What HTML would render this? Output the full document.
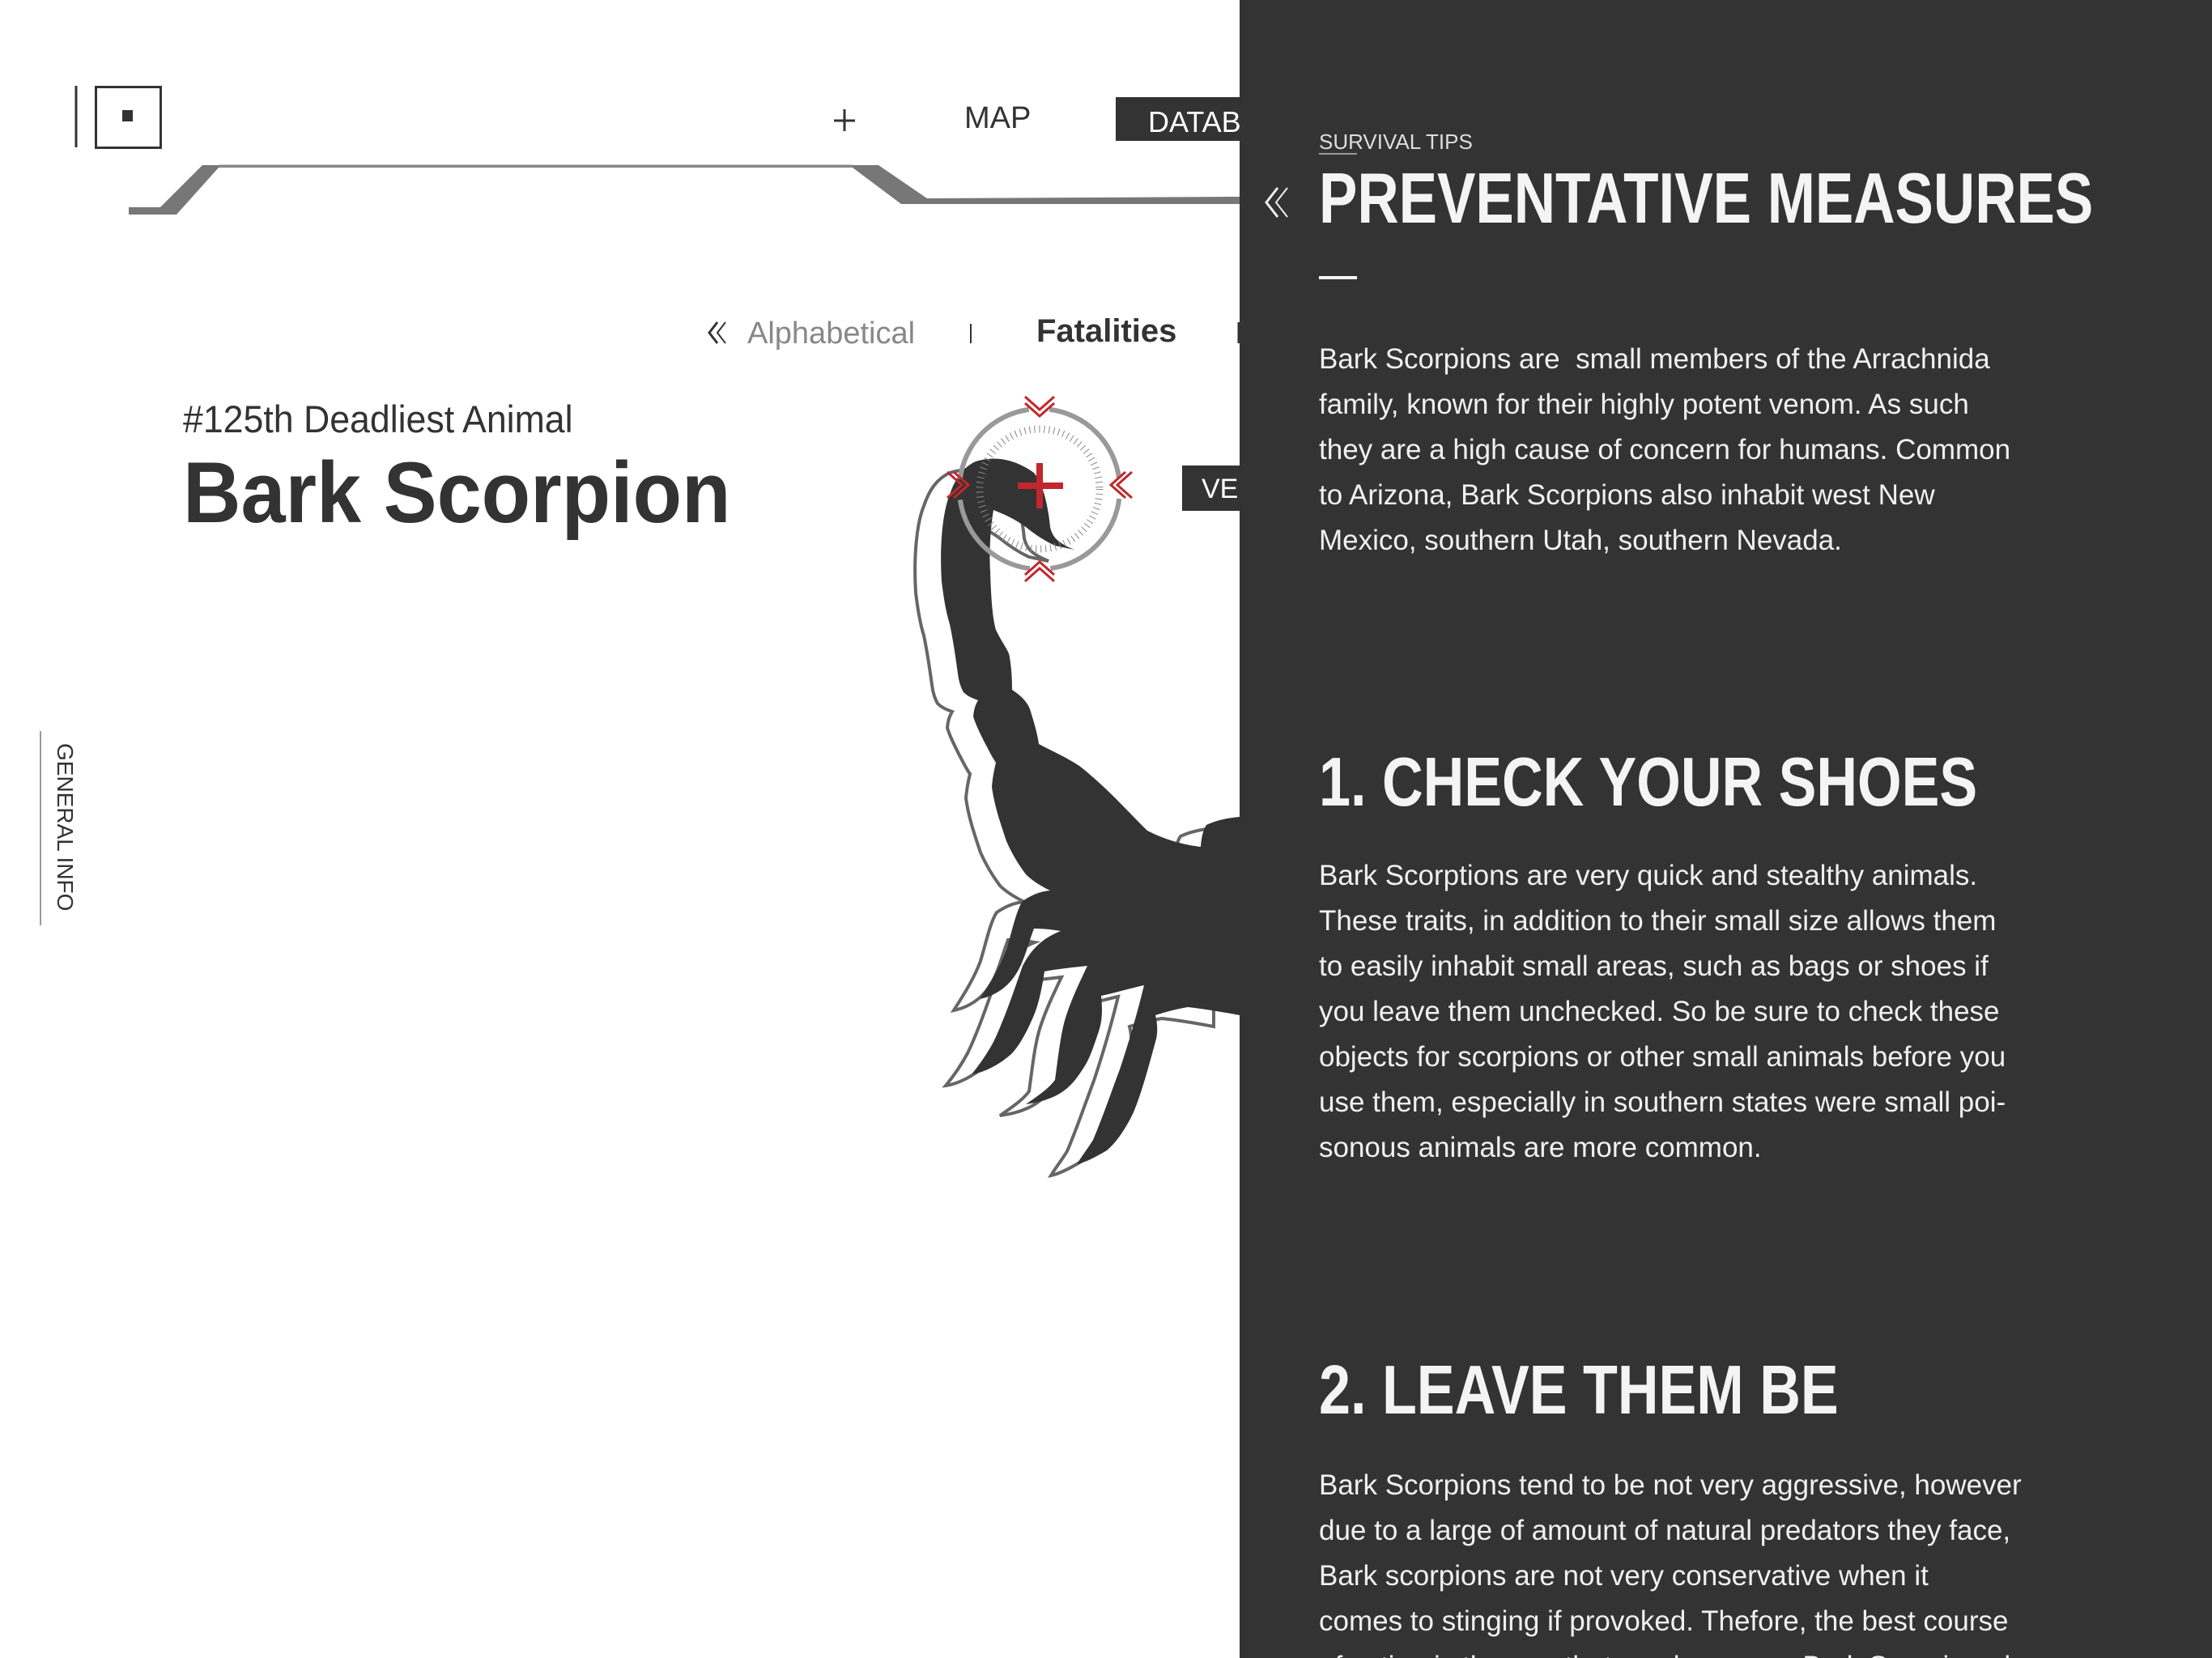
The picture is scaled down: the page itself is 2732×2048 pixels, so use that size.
<!DOCTYPE html>
<html><head><meta charset="utf-8"><style>
*{margin:0;padding:0;box-sizing:border-box}
html,body{width:2732px;height:2048px;overflow:hidden;background:#fff;font-family:"Liberation Sans",sans-serif;color:#333}
#wrap{position:relative;width:2732px;height:2048px;overflow:hidden}
.a{position:absolute;white-space:nowrap;line-height:1}
.panel{position:absolute;left:1531px;top:0;width:1201px;height:2048px;background:#333}
.sx{transform-origin:0 0;display:inline-block}
.body{position:absolute;left:1629px;font-size:35px;line-height:56px;color:#f0f0f0;white-space:nowrap}
.h{position:absolute;left:1629px;font-weight:bold;color:#f4f4f4;line-height:1;white-space:nowrap}
</style></head><body><div id="wrap">

<svg class="a" style="left:0;top:0" width="1531" height="2048" viewBox="0 0 1531 2048">
  <line x1="94" y1="106" x2="94" y2="182" stroke="#333" stroke-width="3"/>
  <rect x="118.5" y="107.5" width="80" height="75" fill="none" stroke="#333" stroke-width="3"/>
  <rect x="151" y="136" width="13" height="14" fill="#333"/>
  <line x1="1043" y1="135" x2="1043" y2="162" stroke="#333" stroke-width="3"/>
  <line x1="1030" y1="149" x2="1056" y2="149" stroke="#333" stroke-width="3"/>
  <polygon points="159,256 198,256 250,204 1053,204 1085,204 1145,245 1531,243 1531,252 1113,252 1053,207 270,207 218,265 159,265" fill="#777"/>
  <line x1="270" y1="205" x2="1053" y2="205" stroke="#888" stroke-width="3"/>
  <polyline points="886,398 876,411 886,424" fill="none" stroke="#333" stroke-width="3"/>
  <polyline points="896,398 886,411 896,424" fill="none" stroke="#333" stroke-width="2"/>
  <line x1="1199" y1="400" x2="1199" y2="424" stroke="#333" stroke-width="2"/>
  <line x1="1530" y1="398" x2="1530" y2="424" stroke="#333" stroke-width="3"/>
  <line x1="50" y1="903" x2="50" y2="1143" stroke="#999" stroke-width="2"/>

  <g transform="translate(-32,14)">
  <path id="sc" d="M1163,718 C1160,670 1165,630 1173,611 C1180,590 1190,577 1205,570 C1230,562 1255,568 1277,584 C1290,600 1295,630 1297,651 C1300,663 1305,670 1327,679 L1303,674 C1290,668 1278,660 1267,651 C1255,642 1240,635 1227,630 C1222,660 1222,690 1223,705 C1224,740 1226,765 1230,778 C1238,795 1247,805 1247,812 C1250,830 1250,845 1250,852 C1262,860 1270,868 1273,879 C1278,895 1282,910 1283,919 C1300,928 1318,936 1333,946 C1370,975 1400,1010 1417,1026 C1440,1038 1465,1044 1483,1046 C1484,1030 1488,1022 1490,1019 C1505,1012 1520,1010 1531,1009 L1531,1254 C1510,1250 1485,1246 1467,1244 C1450,1247 1440,1250 1427,1254 C1430,1265 1430,1278 1427,1287 C1418,1320 1410,1350 1400,1374 C1390,1395 1378,1412 1367,1421 C1352,1430 1340,1436 1330,1438 C1336,1428 1344,1418 1350,1408 C1362,1380 1372,1350 1383,1321 C1395,1285 1405,1250 1413,1217 C1395,1221 1378,1226 1360,1230 C1362,1250 1361,1262 1357,1274 C1350,1295 1345,1310 1337,1321 C1325,1340 1315,1348 1303,1354 C1290,1360 1280,1362 1267,1364 C1280,1355 1295,1345 1303,1334 C1307,1305 1310,1275 1317,1254 C1325,1230 1335,1210 1343,1193 C1325,1195 1305,1197 1290,1200 C1287,1220 1283,1240 1277,1254 C1268,1275 1260,1290 1250,1301 C1235,1315 1215,1325 1200,1327 C1210,1315 1220,1300 1227,1287 C1240,1260 1252,1225 1263,1193 C1275,1170 1290,1158 1310,1150 C1298,1148 1287,1147 1277,1147 C1272,1160 1268,1175 1263,1187 C1258,1200 1250,1212 1240,1220 C1230,1228 1220,1232 1210,1234 C1222,1215 1235,1195 1243,1173 C1250,1150 1255,1125 1263,1113 C1275,1105 1285,1101 1297,1100 C1285,1094 1275,1088 1267,1080 C1258,1068 1250,1055 1243,1039 C1236,1018 1228,995 1225,972 C1226,960 1228,950 1230,942 C1225,935 1222,928 1217,919 C1210,905 1205,895 1202,885 C1203,875 1205,870 1208,865 C1200,862 1195,860 1190,855 C1186,848 1184,840 1183,832 C1180,810 1177,790 1173,771 C1168,755 1165,735 1163,718 Z" fill="#fff" stroke="#666" stroke-width="4"/>
  </g>
  <path d="M1163,718 C1160,670 1165,630 1173,611 C1180,590 1190,577 1205,570 C1230,562 1255,568 1277,584 C1290,600 1295,630 1297,651 C1300,663 1305,670 1327,679 L1303,674 C1290,668 1278,660 1267,651 C1255,642 1240,635 1227,630 C1222,660 1222,690 1223,705 C1224,740 1226,765 1230,778 C1238,795 1247,805 1247,812 C1250,830 1250,845 1250,852 C1262,860 1270,868 1273,879 C1278,895 1282,910 1283,919 C1300,928 1318,936 1333,946 C1370,975 1400,1010 1417,1026 C1440,1038 1465,1044 1483,1046 C1484,1030 1488,1022 1490,1019 C1505,1012 1520,1010 1531,1009 L1531,1254 C1510,1250 1485,1246 1467,1244 C1450,1247 1440,1250 1427,1254 C1430,1265 1430,1278 1427,1287 C1418,1320 1410,1350 1400,1374 C1390,1395 1378,1412 1367,1421 C1352,1430 1340,1436 1330,1438 C1336,1428 1344,1418 1350,1408 C1362,1380 1372,1350 1383,1321 C1395,1285 1405,1250 1413,1217 C1395,1221 1378,1226 1360,1230 C1362,1250 1361,1262 1357,1274 C1350,1295 1345,1310 1337,1321 C1325,1340 1315,1348 1303,1354 C1290,1360 1280,1362 1267,1364 C1280,1355 1295,1345 1303,1334 C1307,1305 1310,1275 1317,1254 C1325,1230 1335,1210 1343,1193 C1325,1195 1305,1197 1290,1200 C1287,1220 1283,1240 1277,1254 C1268,1275 1260,1290 1250,1301 C1235,1315 1215,1325 1200,1327 C1210,1315 1220,1300 1227,1287 C1240,1260 1252,1225 1263,1193 C1275,1170 1290,1158 1310,1150 C1298,1148 1287,1147 1277,1147 C1272,1160 1268,1175 1263,1187 C1258,1200 1250,1212 1240,1220 C1230,1228 1220,1232 1210,1234 C1222,1215 1235,1195 1243,1173 C1250,1150 1255,1125 1263,1113 C1275,1105 1285,1101 1297,1100 C1285,1094 1275,1088 1267,1080 C1258,1068 1250,1055 1243,1039 C1236,1018 1228,995 1225,972 C1226,960 1228,950 1230,942 C1225,935 1222,928 1217,919 C1210,905 1205,895 1202,885 C1203,875 1205,870 1208,865 C1200,862 1195,860 1190,855 C1186,848 1184,840 1183,832 C1180,810 1177,790 1173,771 C1168,755 1165,735 1163,718 Z" fill="#333"/>

  <g fill="none">
    <circle cx="1284" cy="604" r="99" stroke="#999" stroke-width="6" stroke-dasharray="130 25.5" stroke-dashoffset="-12"/>
    <circle cx="1284" cy="604" r="74" stroke="#888" stroke-width="9" stroke-dasharray="1 5"/>
    <g stroke="#c1272d" stroke-width="3">
      <polyline points="1266,490 1284,506 1302,490"/><polyline points="1266,498 1284,514 1302,498"/>
      <polyline points="1266,718 1284,702 1302,718"/><polyline points="1266,710 1284,694 1302,710"/>
      <polyline points="1170,583 1188,599 1170,615"/><polyline points="1178,583 1196,599 1178,615"/>
      <polyline points="1398,583 1380,599 1398,615"/><polyline points="1390,583 1372,599 1390,615"/>
    </g>
    <line x1="1257" y1="600" x2="1313" y2="600" stroke="#c1272d" stroke-width="8"/>
    <line x1="1284" y1="572" x2="1284" y2="628" stroke="#c1272d" stroke-width="8"/>
  </g>
</svg>

<div class="a" style="left:1191px;top:127px;font-size:38px;color:#333">MAP</div>
<div class="a" style="left:1378px;top:120px;width:153px;height:54px;background:#333;overflow:hidden"><span style="position:absolute;left:40px;top:13px;font-size:36px;color:#fff">DATABASE</span></div>
<div class="a" style="left:923px;top:393px;font-size:38px;color:#888">Alphabetical</div>
<div class="a" style="left:1280px;top:389px;font-size:40px;font-weight:bold;color:#333">Fatalities</div>
<div class="a" style="left:226px;top:494px;font-size:47px;color:#333"><span class="sx" style="transform:scaleX(0.95)">#125th Deadliest Animal</span></div>
<div class="a" style="left:226px;top:555px;font-size:107px;font-weight:bold;color:#333"><span class="sx" style="transform:scaleX(0.925)">Bark Scorpion</span></div>
<div class="a" style="left:1460px;top:575px;width:71px;height:56px;background:#333;overflow:hidden"><span style="position:absolute;left:24px;top:12px;font-size:34px;color:#fff">VERIFY</span></div>
<div class="a" style="left:94px;top:918px;font-size:28px;color:#333;transform-origin:0 0;transform:rotate(90deg)">GENERAL INFO</div>

<div class="panel"></div>
<svg class="a" style="left:1560px;top:228px" width="40" height="44">
  <polyline points="18,4 4,22 18,40" fill="none" stroke="#eee" stroke-width="3"/>
  <polyline points="30,4 16,22 30,40" fill="none" stroke="#eee" stroke-width="2"/>
</svg>
<div class="a" style="left:1629px;top:162px;font-size:26px;color:#ddd">SURVIVAL TIPS</div>
<div class="a" style="left:1629px;top:189px;width:47px;height:2px;background:#999"></div>
<div class="h" style="top:201px;font-size:88px"><span class="sx" style="transform:scaleX(0.807)">PREVENTATIVE MEASURES</span></div>
<div class="a" style="left:1629px;top:341px;width:47px;height:4px;background:#f4f4f4"></div>
<div class="body" style="top:416px">Bark Scorpions are&nbsp; small members of the Arrachnida<br>family, known for their highly potent venom. As such<br>they are a high cause of concern for humans. Common<br>to Arizona, Bark Scorpions also inhabit west New<br>Mexico, southern Utah, southern Nevada.</div>
<div class="h" style="top:924px;font-size:85px"><span class="sx" style="transform:scaleX(0.825)">1. CHECK YOUR SHOES</span></div>
<div class="body" style="top:1054px">Bark Scorptions are very quick and stealthy animals.<br>These traits, in addition to their small size allows them<br>to easily inhabit small areas, such as bags or shoes if<br>you leave them unchecked. So be sure to check these<br>objects for scorpions or other small animals before you<br>use them, especially in southern states were small poi-<br>sonous animals are more common.</div>
<div class="h" style="top:1675px;font-size:85px"><span class="sx" style="transform:scaleX(0.825)">2. LEAVE THEM BE</span></div>
<div class="body" style="top:1807px">Bark Scorpions tend to be not very aggressive, however<br>due to a large of amount of natural predators they face,<br>Bark scorpions are not very conservative when it<br>comes to stinging if provoked. Thefore, the best course<br>of action is the one that can leave any Bark Scorpion alone.</div>
</div></body></html>
